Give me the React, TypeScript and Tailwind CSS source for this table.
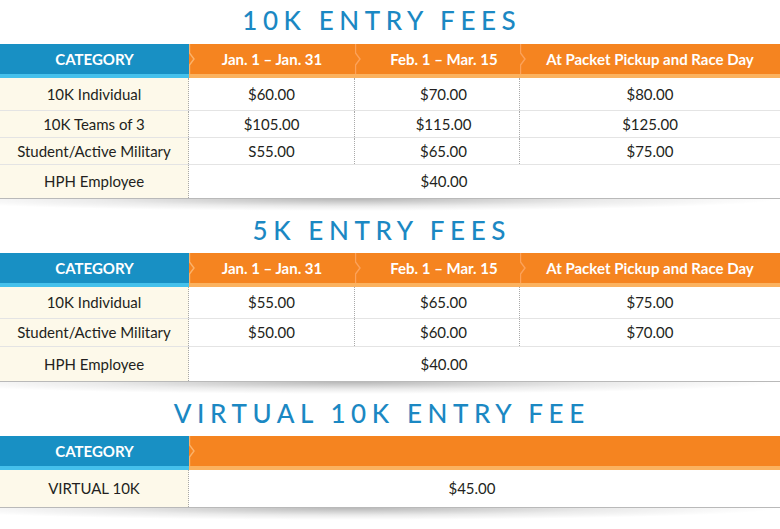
import React from "react";

const FONT = { fontFamily: "Lato, 'Open Sans', Arial, sans-serif" };

function Chevron({ light }: { light?: boolean }) {
  return (
    <svg
      className="absolute left-0 top-0 h-[30px] w-[8px]"
      viewBox="0 0 8 30"
      preserveAspectRatio="none"
    >
      <polyline
        points="0.5,0 0.5,9 5,15 0.5,21 0.5,30"
        fill="none"
        stroke={light ? "#fbb26a" : "#fca25a"}
        strokeWidth="1.4"
      />
    </svg>
  );
}

function Header({ cols }: { cols: boolean }) {
  return (
    <div className="flex h-[34px]">
      <div className="flex w-[189px] shrink-0 flex-col">
        <div className="flex h-[30px] items-center justify-center bg-[#1890c4] text-[15px] font-bold text-white">
          CATEGORY
        </div>
        <div className="h-[4px] bg-[#45c1ec]" />
      </div>
      <div className="flex flex-1 flex-col">
        <div className="flex h-[30px] bg-[#f58420]">
          {cols ? (
            <>
              <div className="relative flex w-[166px] items-center justify-center text-[15px] font-bold text-white">
                <Chevron light />
                Jan. 1 – Jan. 31
              </div>
              <div className="relative flex w-[165px] items-center justify-center pl-[13px] text-[15px] font-bold text-white">
                <Chevron />
                Feb. 1 – Mar. 15
              </div>
              <div className="relative flex flex-1 items-center justify-center text-[15px] font-bold text-white">
                <Chevron />
                At Packet Pickup and Race Day
              </div>
            </>
          ) : (
            <div className="relative flex-1">
              <Chevron light />
            </div>
          )}
        </div>
        <div className="h-[4px] bg-[#fbb25f]" />
      </div>
    </div>
  );
}

type Row = { label: string; vals: string[]; h: number; merged?: number };

function Body({ rows }: { rows: Row[] }) {
  return (
    <div className="border-b border-[#b9b9b9]">
      {rows.map((r, i) => (
        <div
          key={i}
          className={`flex text-[15px] text-[#231f20] ${i > 0 ? "border-t border-[#e4e4e4]" : ""}`}
          style={{ height: r.h }}
        >
          <div className="flex w-[189px] shrink-0 items-center justify-center border-r border-dotted border-[#a9a9a9] bg-[#fdf9ea]">
            {r.label}
          </div>
          {r.vals.length === 3 ? (
            <>
              <div className="flex w-[165px] items-center justify-center">{r.vals[0]}</div>
              <div className="flex w-[165px] items-center justify-center border-l border-dotted border-[#a9a9a9] pl-[13px]">
                {r.vals[1]}
              </div>
              <div className="flex flex-1 items-center justify-center border-l border-dotted border-[#a9a9a9]">
                {r.vals[2]}
              </div>
            </>
          ) : (
            <div className="flex flex-1 items-center">
              <div className="text-center" style={{ width: r.merged }}>
                {r.vals[0]}
              </div>
            </div>
          )}
        </div>
      ))}
    </div>
  );
}

function Shadow() {
  return (
    <div className="h-[12px] bg-[radial-gradient(ellipse_55%_100%_at_45%_0%,rgba(0,0,0,0.28),rgba(0,0,0,0.08)_60%,transparent_100%)]" />
  );
}

function Title({ text, h }: { text: string; h: number }) {
  return (
    <div
      className="flex items-center justify-center pb-[3px] pr-[22px] text-[26px] font-medium tracking-[0.215em] text-[#1b88c3]"
      style={{ height: h }}
    >
      <span className="pl-[0.215em]">{text}</span>
    </div>
  );
}

export default function App() {
  return (
    <div className="h-[529px] w-[780px] overflow-hidden bg-white" style={FONT}>
      <Title text="10K ENTRY FEES" h={44} />
      <Header cols />
      <Body
        rows={[
          { label: "10K Individual", vals: ["$60.00", "$70.00", "$80.00"], h: 32 },
          { label: "10K Teams of 3", vals: ["$105.00", "$115.00", "$125.00"], h: 27 },
          { label: "Student/Active Military", vals: ["S55.00", "$65.00", "$75.00"], h: 27 },
          { label: "HPH Employee", vals: ["$40.00"], h: 34, merged: 510 },
        ]}
      />
      <Shadow />
      <Title text="5K ENTRY FEES" h={42} />
      <Header cols />
      <Body
        rows={[
          { label: "10K Individual", vals: ["$55.00", "$65.00", "$75.00"], h: 31 },
          { label: "Student/Active Military", vals: ["$50.00", "$60.00", "$70.00"], h: 28 },
          { label: "HPH Employee", vals: ["$40.00"], h: 35, merged: 510 },
        ]}
      />
      <Shadow />
      <Title text="VIRTUAL 10K ENTRY FEE" h={42} />
      <Header cols={false} />
      <Body rows={[{ label: "VIRTUAL 10K", vals: ["$45.00"], h: 37, merged: 566 }]} />
      <Shadow />
    </div>
  );
}
